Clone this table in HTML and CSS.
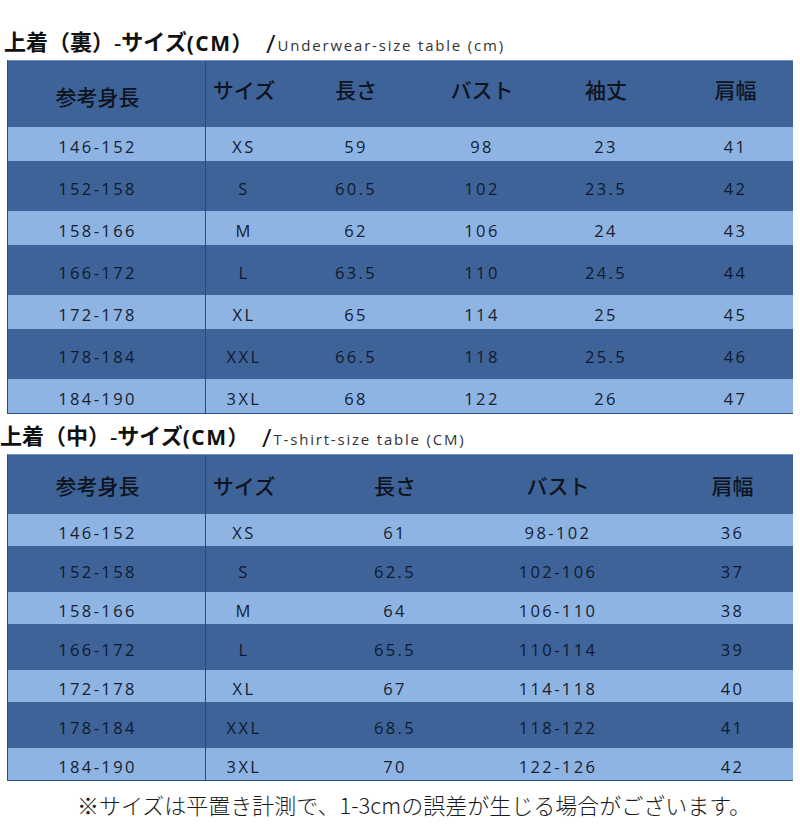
FILE: index.html
```html
<!DOCTYPE html>
<html lang="ja">
<head>
<meta charset="utf-8">
<title>サイズ表</title>
<link rel="stylesheet" href="styles.css">
</head>
<body>
<div class="page">
  <h2 class="title title-1">
    <span class="jp">上着（裏）-サイズ</span><span class="cm">(CM）</span><span class="slash">/</span><span class="en">Underwear-size table (cm)</span>
  </h2>
  <div class="table t1">
    <div class="row head">
      <div class="c first hfirst">参考身長</div><div class="c">サイズ</div><div class="c">長さ</div><div class="c">バスト</div><div class="c">袖丈</div><div class="c">肩幅</div>
    </div>
    <div class="row light"><div class="c first">146-152</div><div class="c">XS</div><div class="c">59</div><div class="c">98</div><div class="c">23</div><div class="c">41</div></div>
    <div class="row dark"><div class="c first">152-158</div><div class="c">S</div><div class="c">60.5</div><div class="c">102</div><div class="c">23.5</div><div class="c">42</div></div>
    <div class="row light"><div class="c first">158-166</div><div class="c">M</div><div class="c">62</div><div class="c">106</div><div class="c">24</div><div class="c">43</div></div>
    <div class="row dark"><div class="c first">166-172</div><div class="c">L</div><div class="c">63.5</div><div class="c">110</div><div class="c">24.5</div><div class="c">44</div></div>
    <div class="row light"><div class="c first">172-178</div><div class="c">XL</div><div class="c">65</div><div class="c">114</div><div class="c">25</div><div class="c">45</div></div>
    <div class="row dark"><div class="c first">178-184</div><div class="c">XXL</div><div class="c">66.5</div><div class="c">118</div><div class="c">25.5</div><div class="c">46</div></div>
    <div class="row light"><div class="c first">184-190</div><div class="c">3XL</div><div class="c">68</div><div class="c">122</div><div class="c">26</div><div class="c">47</div></div>
  </div>

  <h2 class="title title-2">
    <span class="jp">上着（中）-サイズ</span><span class="cm">(CM）</span><span class="slash">/</span><span class="en">T-shirt-size table (CM)</span>
  </h2>
  <div class="table t2">
    <div class="row head">
      <div class="c first">参考身長</div><div class="c">サイズ</div><div class="c">長さ</div><div class="c">バスト</div><div class="c last">肩幅</div>
    </div>
    <div class="row light"><div class="c first">146-152</div><div class="c">XS</div><div class="c">61</div><div class="c">98-102</div><div class="c last">36</div></div>
    <div class="row dark"><div class="c first">152-158</div><div class="c">S</div><div class="c">62.5</div><div class="c">102-106</div><div class="c last">37</div></div>
    <div class="row light"><div class="c first">158-166</div><div class="c">M</div><div class="c">64</div><div class="c">106-110</div><div class="c last">38</div></div>
    <div class="row dark"><div class="c first">166-172</div><div class="c">L</div><div class="c">65.5</div><div class="c">110-114</div><div class="c last">39</div></div>
    <div class="row light"><div class="c first">172-178</div><div class="c">XL</div><div class="c">67</div><div class="c">114-118</div><div class="c last">40</div></div>
    <div class="row dark"><div class="c first">178-184</div><div class="c">XXL</div><div class="c">68.5</div><div class="c">118-122</div><div class="c last">41</div></div>
    <div class="row light"><div class="c first">184-190</div><div class="c">3XL</div><div class="c">70</div><div class="c">122-126</div><div class="c last">42</div></div>
  </div>

  <p class="note">※サイズは平置き計測で、1-3cmの誤差が生じる場合がございます。</p>
</div>
</body>
</html>
```

FILE: styles.css
```css
* { box-sizing: border-box; }

html, body {
  margin: 0;
  padding: 0;
  background: #ffffff;
}

.page {
  width: 800px;
  height: 826px;
  overflow: hidden;
  font-family: "Open Sans", "Noto Sans CJK JP", sans-serif;
  color: #16202f;
}

.title {
  margin: 0;
  display: flex;
  align-items: flex-end;
  font-weight: normal;
  white-space: nowrap;
  color: #111;
}

.title-1 {
  height: 60px;
  padding: 0 0 4px 4px;
}

.title-2 {
  height: 40px;
  padding: 0 0 4px 0;
}

.title .jp {
  font-family: "Liberation Serif", "Noto Sans CJK JP", serif;
  font-weight: 700;
  font-size: 22px;
  line-height: 26px;
  letter-spacing: 0;
}

.title .cm {
  font-family: "Open Sans", "Noto Sans CJK JP", sans-serif;
  font-weight: 700;
  font-size: 21px;
  line-height: 26px;
  letter-spacing: 1.5px;
}

.title .slash {
  font-family: "Open Sans", sans-serif;
  font-size: 26px;
  line-height: 26px;
  margin-left: 12px;
  margin-right: 2px;
}

.title .en {
  font-family: "Open Sans", sans-serif;
  font-size: 15px;
  line-height: 20px;
  letter-spacing: 1.8px;
  color: #333;
  padding-bottom: 1px;
}

.table {
  margin-left: 7px;
  width: 786px;
  border-left: 1px solid #2d4d7c;
  border-bottom: 1px solid #2d4d7c;
  border-top: 1px solid #7090c0;
}

.row {
  display: grid;
  align-items: center;
}

.t1 .row { grid-template-columns: 198px 76px 148px 104px 144px 115px; }
.t2 .row { grid-template-columns: 198px 76px 226px 100px 185px; }

.row.head { background: #3e6399; }
.row.dark { background: #3e6399; }
.row.light { background: #8db4e3; }

.t1 .row.head { height: 66px; }
.t1 .row.light { height: 34px; }
.t1 .row.dark { height: 50px; }

.t2 .row.head { height: 59px; }
.t2 .row.light { height: 32px; }
.t2 .row.dark { height: 46px; }

.c {
  height: 100%;
  display: flex;
  align-items: center;
  justify-content: center;
  font-size: 16.5px;
  letter-spacing: 2.4px;
  padding-top: 4px;
  white-space: nowrap;
}

.row.dark .c { color: #0f1a2e; }

.c.first {
  border-right: 1px solid #2b4a78;
  padding-right: 18px;
}

.t2 .c.last { padding-left: 64px; }

.row.head .c {
  font-family: "Noto Sans CJK JP", sans-serif;
  font-size: 21px;
  font-weight: 500;
  letter-spacing: 0;
  color: #0e1420;
  padding-top: 0;
  padding-bottom: 10px;
}

.t1 .row.head .c.hfirst { padding-top: 4px; padding-bottom: 0; }
.t2 .row.head .c { padding-bottom: 0; }

.note {
  margin: 0;
  height: 46px;
  display: flex;
  align-items: center;
  justify-content: center;
  padding-left: 28px;
  font-family: "Noto Sans CJK JP", sans-serif;
  font-weight: 300;
  font-size: 22px;
  color: #1a1a1a;
  white-space: nowrap;
}
```
